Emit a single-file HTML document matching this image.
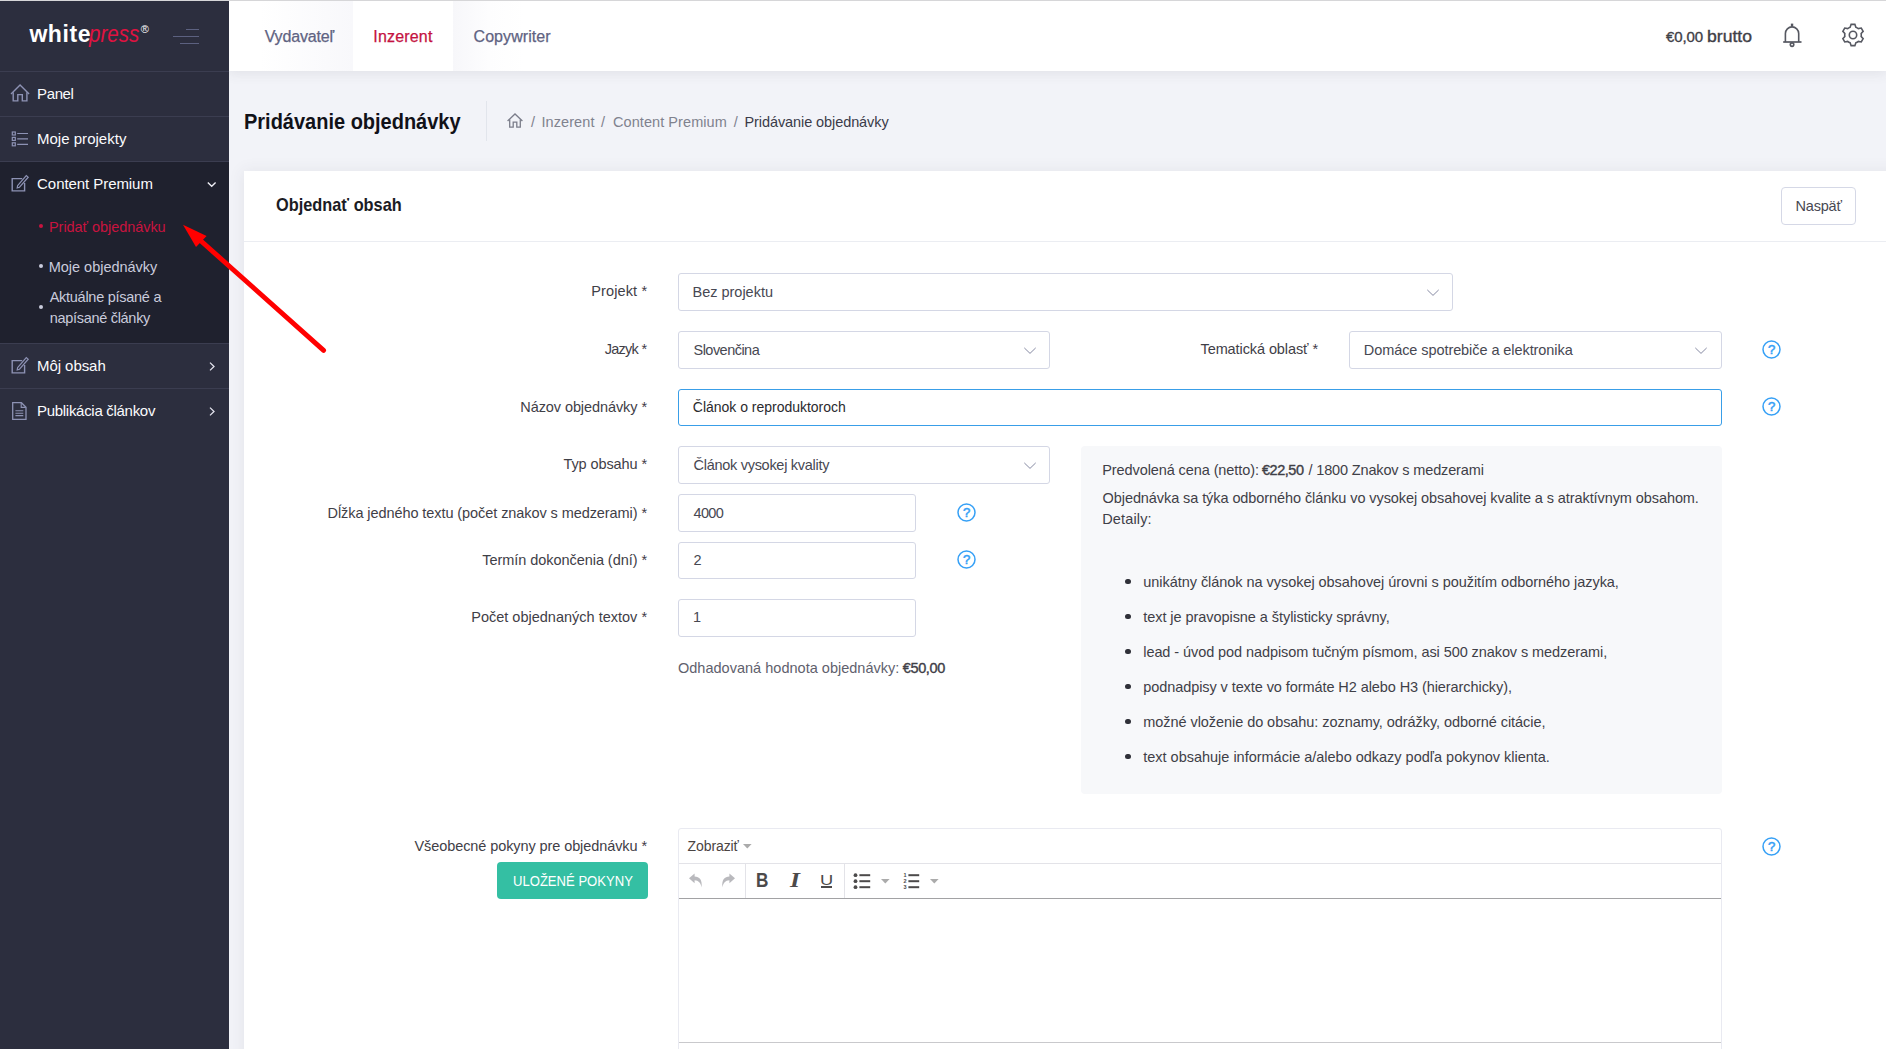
<!DOCTYPE html>
<html lang="sk">
<head>
<meta charset="utf-8">
<title>Pridávanie objednávky</title>
<style>
*{box-sizing:border-box;margin:0;padding:0}
html,body{width:1886px;height:1049px;overflow:hidden;background:#f2f3f8}
body{position:relative;font-family:"Liberation Sans",sans-serif;font-size:14.5px;color:#3f4047}
.a{position:absolute;white-space:nowrap;line-height:1;z-index:10}
.t{position:absolute;white-space:nowrap;line-height:20px;height:20px}
#topline{position:absolute;left:0;top:0;width:1886px;height:1px;background:#d6d6d8;z-index:50}

/* ---------- sidebar ---------- */
#side{position:absolute;left:0;top:1px;width:229px;height:1048px;background:#2c2e3e;z-index:5}
#side .ln{position:absolute;left:0;width:229px;height:1px;background:#3b3d50}
#side .act{position:absolute;left:0;top:161px;width:229px;height:181px;background:#1f212e}
.mi{color:#fbfbfd;font-size:15px}
.si{color:#c9cbdc;font-size:14.5px}
.si.on{color:#c9133f}
#side .dot{position:absolute;width:4px;height:4px;border-radius:50%;background:#c9cbdc}
#side .dot.on{background:#c9133f}
#logo1{color:#fff;font-weight:bold;font-size:23px}
#logo2{color:#e01241;font-style:italic;font-size:24px}
#logo3{color:#fff;font-size:11px}

/* ---------- top bar ---------- */
#top{position:absolute;left:229px;top:1px;width:1657px;height:70px;background:#fff;box-shadow:0 1px 12px 1px rgba(69,65,78,.10);z-index:4}
#top .tab{position:absolute;top:0;height:70px;background:linear-gradient(90deg,#ffffff 25%,#f8f8fb 100%)}
#top .tab.on{background:#fff}
.tt{color:#5f6382;font-size:16px;-webkit-text-stroke:0.25px #5f6382}
.tt.on{color:#c4123f;-webkit-text-stroke:0.25px #c4123f}
.bal{color:#3f4047;font-size:16px;-webkit-text-stroke:0.35px #3f4047}

/* ---------- main ---------- */
#h1{font-weight:bold;font-size:22.3px;color:#111118;line-height:26px;height:26px}
#sep{position:absolute;left:486px;top:101px;width:1px;height:40px;background:#e2e5ec}
.bc{color:#80828e;font-size:14.5px}
.bc.last{color:#3a3b49}
#card{position:absolute;left:244px;top:171px;width:1660px;height:900px;background:#fff;box-shadow:0 1px 15px 1px rgba(69,65,78,.08)}
#cardln{position:absolute;left:244px;top:241px;width:1660px;height:1px;background:#ebedf2}
#h3{font-weight:bold;font-size:18.6px;color:#1b1c24;line-height:22px;height:22px}
#back{position:absolute;left:1781px;top:187px;width:75px;height:38px;border:1px solid #d5d8e6;border-radius:4px;background:#fff}
.lbl{color:#3f4047}
.box{position:absolute;border:1px solid #d4d7e5;border-radius:3px;background:#fff}
.box.f{border-color:#399ee8}
.val{color:#474852}
.chev{position:absolute;width:12px;height:7px;margin-top:0.3px;overflow:visible}
.help{position:absolute;width:19px;height:19px}
#info{position:absolute;left:1081px;top:446px;width:641px;height:348px;background:#f7f8fa;border-radius:4px}
.li{color:#3f4047}
.bul{position:absolute;width:5.6px;height:5.6px;margin:0.2px;border-radius:50%;background:#2f3038}
#est{color:#6b6d78}
#est b{color:#3f4047}
#btn{position:absolute;left:497px;top:862px;width:151px;height:37px;border-radius:4px;background:#34bfa3}
#btnt{color:#fff;font-size:14.3px}
#ed{position:absolute;left:678px;top:828px;width:1044px;height:240px;border:1px solid #e9eaf1;border-radius:3px 3px 0 0;background:#fff}
#edl1{position:absolute;left:679px;top:863px;width:1042px;height:1px;background:#e3e3e8}
#edl2{position:absolute;left:679px;top:898px;width:1042px;height:1px;background:#a2a2a4}
#edl3{position:absolute;left:679px;top:1042px;width:1042px;height:1px;background:#c9c9cc}
.vs{position:absolute;top:864px;width:1px;height:34px;background:#e3e3e8}
#zob{color:#4a4442;font-size:14px}
</style>
</head>
<body>
<div id="topline"></div>

<!-- SIDEBAR -->
<div id="side">
  <div class="act"></div>
  <div class="ln" style="top:70px"></div>
  <div class="ln" style="top:115px"></div>
  <div class="ln" style="top:160px"></div>
  <div class="ln" style="top:342px"></div>
  <div class="ln" style="top:387px"></div>

  <!-- hamburger -->
  <div style="position:absolute;left:186px;top:28px;width:13px;height:1px;background:#5c6180"></div>
  <div style="position:absolute;left:173px;top:35px;width:26px;height:1px;background:#5c6180"></div>
  <div style="position:absolute;left:180px;top:42px;width:19px;height:1px;background:#5c6180"></div>
  <!-- home -->
  <svg style="position:absolute;left:9px;top:82.2px" width="22" height="20" viewBox="0 0 22 20" fill="none" stroke="#8d92b4" stroke-width="1.4" stroke-linejoin="miter"><path d="M2 11 L11.05 2.1 L20.1 11"/><path d="M4.2 9.2 V17.9 H8.8 V11.6 H13.3 V17.9 H17.9 V9.2"/></svg>
  <!-- list -->
  <svg style="position:absolute;left:10px;top:129px" width="20" height="18" viewBox="0 0 20 18" fill="none" stroke="#8d92b4" stroke-width="1.2"><rect x="2.3" y="2" width="3" height="3"/><rect x="2.3" y="7.4" width="3" height="3"/><rect x="2.3" y="12.8" width="3" height="3"/><path d="M7.2 3.5 H18 M7.2 8.9 H18 M7.2 14.3 H18"/></svg>
  <!-- edit -->
  <svg style="position:absolute;left:10.3px;top:172.2px" width="20" height="20" viewBox="0 0 20 20" fill="none" stroke="#8d92b4" stroke-width="1.4"><path d="M12.2 5.6 H2.2 V17.9 H14.6 V10"/><path d="M7.6 12.7 L16.3 2.6 L18.2 4.2 L9.5 14.2 L7.2 14.9 Z" stroke-width="1.2"/></svg>
  <svg style="position:absolute;left:206px;top:180px" width="11" height="7" viewBox="0 0 11 7" fill="none" stroke="#f0f0f6" stroke-width="1.4"><path d="M1.8 1.6 L5.7 5.2 L9.6 1.6"/></svg>
  <!-- edit 2 -->
  <svg style="position:absolute;left:10.3px;top:354.2px" width="20" height="20" viewBox="0 0 20 20" fill="none" stroke="#8d92b4" stroke-width="1.4"><path d="M12.2 5.6 H2.2 V17.9 H14.6 V10"/><path d="M7.6 12.7 L16.3 2.6 L18.2 4.2 L9.5 14.2 L7.2 14.9 Z" stroke-width="1.2"/></svg>
  <svg style="position:absolute;left:208.4px;top:359.7px" width="8" height="11" viewBox="0 0 8 11" fill="none" stroke="#e4e4ee" stroke-width="1.3"><path d="M2 1.6 L6 5.5 L2 9.4"/></svg>
  <!-- doc -->
  <svg style="position:absolute;left:10px;top:399px" width="20" height="22" viewBox="0 0 20 22" fill="none" stroke="#8d92b4" stroke-width="1.3"><path d="M2.7 2.7 H11.4 L16 7.2 V19.3 H2.7 Z"/><path d="M11.2 2.9 V7.4 H15.8" stroke-width="1.1"/><path d="M5.4 10.8 H13.3 M5.4 13.2 H13.3 M5.4 15.6 H13.3" stroke-width="1.1"/></svg>
  <svg style="position:absolute;left:208.4px;top:404.7px" width="8" height="11" viewBox="0 0 8 11" fill="none" stroke="#e4e4ee" stroke-width="1.3"><path d="M2 1.6 L6 5.5 L2 9.4"/></svg>
  <div class="dot on" style="left:39px;top:223px"></div>
  <div class="dot" style="left:39px;top:263px"></div>
  <div class="dot" style="left:39px;top:304px"></div>
</div>

<!-- TOP BAR -->
<div id="top">
  <div class="tab" style="left:0;width:124px"></div>
  <div class="tab on" style="left:124px;width:100px"></div>
  <div class="tab" style="left:224px;width:119px;background:linear-gradient(90deg,#f7f7fa 0%,#fdfdfe 30%,#ffffff 60%)"></div>

  <!-- bell -->
  <svg style="position:absolute;left:1551.3px;top:20px" width="24" height="28" viewBox="0 0 24 28" fill="none" stroke="#565861" stroke-width="1.6"><circle cx="12.05" cy="23.6" r="1.75"/><path d="M5.4 21 V12.55 A6.65 6.65 0 0 1 18.7 12.55 V21" fill="#fff"/><path d="M3.2 21 H21.5" stroke-width="1.7"/><path d="M12.05 5.6 V2.6" stroke-width="2.4"/></svg>
  <!-- gear -->
  <svg style="position:absolute;left:1609.5px;top:19.9px" width="28" height="28" viewBox="0 0 28 28" fill="none" stroke="#565861" stroke-width="1.6" stroke-linejoin="miter"><circle cx="14" cy="14" r="3.7"/><path d="M16.84 6.20 L15.88 3.36 L12.12 3.36 L11.16 6.20 A8.30 8.30 0 0 0 8.66 7.64 L5.73 7.06 L3.85 10.31 L5.83 12.56 A8.30 8.30 0 0 0 5.83 15.44 L3.85 17.69 L5.73 20.94 L8.66 20.36 A8.30 8.30 0 0 0 11.16 21.80 L12.12 24.64 L15.88 24.64 L16.84 21.80 A8.30 8.30 0 0 0 19.34 20.36 L22.27 20.94 L24.15 17.69 L22.17 15.44 A8.30 8.30 0 0 0 22.17 12.56 L24.15 10.31 L22.27 7.06 L19.34 7.64 A8.30 8.30 0 0 0 16.84 6.20 Z"/></svg>
</div>

<div id="card"></div>
<div id="cardln"></div>
<div id="sep"></div>

<!-- breadcrumb home -->
<svg style="position:absolute;left:505.6px;top:112.2px" width="18" height="17" viewBox="0 0 18 17" fill="none" stroke="#7b7d8a" stroke-width="1.3"><path d="M1.6 9 L9 2 L16.4 9"/><path d="M3.7 7.6 V15.2 H7.2 V10.2 H10.8 V15.2 H14.3 V7.6"/></svg>
<div id="back"></div>
<div class="box" style="left:678px;top:273px;width:775px;height:38px"></div>
<div class="box" style="left:678px;top:331px;width:372px;height:38px"></div>
<div class="box" style="left:1349px;top:331px;width:373px;height:38px"></div>
<div class="box f" style="left:678px;top:389px;width:1044px;height:37px"></div>
<div class="box" style="left:678px;top:446px;width:372px;height:38px"></div>
<div class="box" style="left:678px;top:494px;width:238px;height:38px"></div>
<div class="box" style="left:678px;top:542px;width:238px;height:37px"></div>
<div class="box" style="left:678px;top:599px;width:238px;height:38px"></div>
<svg class="chev" style="left:1427px;top:289px" viewBox="0 0 12 7" fill="none" stroke="#80849e" stroke-width="0.95"><path d="M0.3 0.9 L6 6.4 L11.7 0.9"/></svg><svg class="chev" style="left:1024px;top:347px" viewBox="0 0 12 7" fill="none" stroke="#80849e" stroke-width="0.95"><path d="M0.3 0.9 L6 6.4 L11.7 0.9"/></svg><svg class="chev" style="left:1695px;top:347px" viewBox="0 0 12 7" fill="none" stroke="#80849e" stroke-width="0.95"><path d="M0.3 0.9 L6 6.4 L11.7 0.9"/></svg><svg class="chev" style="left:1024px;top:462px" viewBox="0 0 12 7" fill="none" stroke="#80849e" stroke-width="0.95"><path d="M0.3 0.9 L6 6.4 L11.7 0.9"/></svg>
<svg class="help" style="left:1761.5px;top:340px" viewBox="0 0 19 19"><circle cx="9.5" cy="9.5" r="8.5" fill="none" stroke="#36a0f6" stroke-width="1.5"/><text x="9.6" y="14.2" text-anchor="middle" font-family="Liberation Sans, sans-serif" font-size="13.2" fill="#36a0f6" stroke="#36a0f6" stroke-width="0.5">?</text></svg><svg class="help" style="left:1761.5px;top:396.8px" viewBox="0 0 19 19"><circle cx="9.5" cy="9.5" r="8.5" fill="none" stroke="#36a0f6" stroke-width="1.5"/><text x="9.6" y="14.2" text-anchor="middle" font-family="Liberation Sans, sans-serif" font-size="13.2" fill="#36a0f6" stroke="#36a0f6" stroke-width="0.5">?</text></svg><svg class="help" style="left:956.5px;top:503px" viewBox="0 0 19 19"><circle cx="9.5" cy="9.5" r="8.5" fill="none" stroke="#36a0f6" stroke-width="1.5"/><text x="9.6" y="14.2" text-anchor="middle" font-family="Liberation Sans, sans-serif" font-size="13.2" fill="#36a0f6" stroke="#36a0f6" stroke-width="0.5">?</text></svg><svg class="help" style="left:956.5px;top:550.2px" viewBox="0 0 19 19"><circle cx="9.5" cy="9.5" r="8.5" fill="none" stroke="#36a0f6" stroke-width="1.5"/><text x="9.6" y="14.2" text-anchor="middle" font-family="Liberation Sans, sans-serif" font-size="13.2" fill="#36a0f6" stroke="#36a0f6" stroke-width="0.5">?</text></svg><svg class="help" style="left:1762px;top:837px" viewBox="0 0 19 19"><circle cx="9.5" cy="9.5" r="8.5" fill="none" stroke="#36a0f6" stroke-width="1.5"/><text x="9.6" y="14.2" text-anchor="middle" font-family="Liberation Sans, sans-serif" font-size="13.2" fill="#36a0f6" stroke="#36a0f6" stroke-width="0.5">?</text></svg>
<div id="info"></div>
<div class="bul" style="left:1125.3px;top:578.5px"></div>
<div class="bul" style="left:1125.3px;top:613.5px"></div>
<div class="bul" style="left:1125.3px;top:648.5px"></div>
<div class="bul" style="left:1125.3px;top:683.5px"></div>
<div class="bul" style="left:1125.3px;top:718.5px"></div>
<div class="bul" style="left:1125.3px;top:753.5px"></div>
<div id="btn"></div>
<div id="ed"></div>
<div id="edl1"></div><div id="edl2"></div><div id="edl3"></div>
<div class="vs" style="left:745px"></div><div class="vs" style="left:844px"></div>
<!-- editor toolbar icons -->
<svg style="position:absolute;left:742.5px;top:843.5px" width="9" height="5" viewBox="0 0 9 5"><path d="M0 0 H8.6 L4.3 4.4 Z" fill="#ababab"/></svg>
<svg style="position:absolute;left:688px;top:872px" width="16" height="17" viewBox="0 0 16 17"><path d="M1 6.2 L6.6 1.4 V4.4 C11.4 4.6 14.4 7.4 13.6 15.4 C12.8 11 10.6 8.6 6.6 8.3 V11.2 Z" fill="#b9b9bd"/></svg>
<svg style="position:absolute;left:720px;top:872px" width="16" height="17" viewBox="0 0 16 17"><path d="M15 6.2 L9.4 1.4 V4.4 C4.6 4.6 1.6 7.4 2.4 15.4 C3.2 11 5.4 8.6 9.4 8.3 V11.2 Z" fill="#b9b9bd"/></svg>
<span class="a" style="left:756.3px;top:870.6px;font-size:19.5px;font-weight:bold;color:#4c4a4a;transform-origin:0 50%;transform:scaleX(.88)">B</span>
<span class="a" style="left:789.5px;top:869.8px;font-family:'Liberation Serif',serif;font-style:italic;font-weight:bold;font-size:20.5px;color:#4c4a4a;transform-origin:0 50%;transform:scaleX(1.25)">I</span>
<div style="position:absolute;left:821.3px;top:886.4px;width:10.9px;height:1.5px;background:#4c4a4a"></div>
<svg style="position:absolute;left:853px;top:872px" width="18" height="18" viewBox="0 0 18 18" fill="#4c4a4a"><circle cx="2.5" cy="3.2" r="1.9"/><circle cx="2.5" cy="9.2" r="1.9"/><circle cx="2.5" cy="15.2" r="1.9"/><rect x="6.4" y="2.2" width="10.8" height="2"/><rect x="6.4" y="8.2" width="10.8" height="2"/><rect x="6.4" y="14.2" width="10.8" height="2"/></svg>
<svg style="position:absolute;left:880.5px;top:878.5px" width="9" height="5" viewBox="0 0 9 5"><path d="M0 0 H8.6 L4.3 4.4 Z" fill="#ababab"/></svg>
<svg style="position:absolute;left:903px;top:872px" width="18" height="18" viewBox="0 0 18 18" fill="#4c4a4a"><rect x="5.4" y="2.2" width="10.8" height="2"/><rect x="5.4" y="8.2" width="10.8" height="2"/><rect x="5.4" y="14.2" width="10.8" height="2"/><text x="0.4" y="5" font-family="Liberation Sans, sans-serif" font-size="5.5" font-weight="bold">1</text><text x="0.4" y="11" font-family="Liberation Sans, sans-serif" font-size="5.5" font-weight="bold">2</text><text x="0.4" y="17" font-family="Liberation Sans, sans-serif" font-size="5.5" font-weight="bold">3</text></svg>
<svg style="position:absolute;left:929.5px;top:878.5px" width="9" height="5" viewBox="0 0 9 5"><path d="M0 0 H8.6 L4.3 4.4 Z" fill="#ababab"/></svg>
<!-- red arrow -->
<svg style="position:absolute;left:170px;top:210px;z-index:30" width="170" height="155" viewBox="170 210 170 155"><path d="M323.6 350.3 L201 241" stroke="#ff0000" stroke-width="4.9" stroke-linecap="round" fill="none"/><path d="M183 224.8 L206.6 236 L196 247 Z" fill="#ff0000"/></svg>

<!--TEXTS-->
<span class="a" id="logo1" style="left:29.40px;top:23.00px;letter-spacing:0.578px;">white</span>
<span class="a" id="logo2" style="left:89.36px;top:22.00px;transform-origin:0 50%;transform:scaleX(0.8561);">press</span>
<span class="a" id="logo3" style="left:140.80px;top:24.00px;letter-spacing:0.000px;">®</span>
<span class="a mi" id="m1" style="left:37.00px;top:86.25px;letter-spacing:-0.358px;">Panel</span>
<span class="a mi" id="m2" style="left:37.00px;top:131.25px;letter-spacing:0.017px;">Moje projekty</span>
<span class="a mi" id="m3" style="left:37.10px;top:176.25px;letter-spacing:-0.065px;">Content Premium</span>
<span class="a si on" id="s1" style="left:49.00px;top:220.00px;letter-spacing:-0.051px;">Pridať objednávku</span>
<span class="a si" id="s2" style="left:48.70px;top:260.00px;letter-spacing:-0.012px;">Moje objednávky</span>
<span class="a si" id="s3" style="left:49.70px;top:290.00px;letter-spacing:-0.270px;">Aktuálne písané a</span>
<span class="a si" id="s4" style="left:49.70px;top:310.50px;letter-spacing:-0.296px;">napísané články</span>
<span class="a mi" id="m4" style="left:37.00px;top:358.25px;letter-spacing:-0.058px;">Môj obsah</span>
<span class="a mi" id="m5" style="left:37.00px;top:403.25px;letter-spacing:-0.294px;">Publikácia článkov</span>
<span class="a tt" id="t1" style="left:264.70px;top:28.90px;letter-spacing:-0.165px;">Vydavateľ</span>
<span class="a tt on" id="t2" style="left:373.30px;top:28.90px;letter-spacing:0.176px;">Inzerent</span>
<span class="a tt" id="t3" style="left:473.50px;top:28.90px;letter-spacing:0.074px;">Copywriter</span>
<span class="a bal" id="bal" style="left:1666.00px;top:28.90px;letter-spacing:-0.124px;font-size:15px">€0,00</span>
<span class="a bal" id="bal2" style="left:1706.60px;top:28.90px;transform-origin:0 50%;transform:scaleX(1.0996);font-size:16px">brutto</span>
<span class="a" id="h1" style="left:243.80px;top:108.75px;transform-origin:0 50%;transform:scaleX(0.8962);">Pridávanie objednávky</span>
<span class="a bc" id="b1" style="left:531.00px;top:115.00px;letter-spacing:0.000px;">/</span>
<span class="a bc" id="b2" style="left:541.50px;top:115.00px;letter-spacing:0.077px;">Inzerent</span>
<span class="a bc" id="b3" style="left:601.00px;top:115.00px;letter-spacing:0.000px;">/</span>
<span class="a bc" id="b4" style="left:613.00px;top:115.00px;letter-spacing:0.068px;">Content Premium</span>
<span class="a bc" id="b5" style="left:733.80px;top:115.00px;letter-spacing:0.000px;">/</span>
<span class="a bc last" id="b6" style="left:744.50px;top:115.00px;letter-spacing:-0.087px;">Pridávanie objednávky</span>
<span class="a" id="h3" style="left:275.70px;top:194.00px;transform-origin:0 50%;transform:scaleX(0.8778);">Objednať obsah</span>
<span class="a val" id="backt" style="left:1795.50px;top:199.25px;letter-spacing:-0.203px;">Naspäť</span>
<span class="a lbl" id="l1" style="left:591.25px;top:284.00px;letter-spacing:0.124px;">Projekt *</span>
<span class="a lbl" id="l2" style="left:604.75px;top:342.25px;letter-spacing:-0.740px;">Jazyk *</span>
<span class="a lbl" id="l3" style="left:1200.50px;top:342.25px;letter-spacing:-0.090px;">Tematická oblasť *</span>
<span class="a lbl" id="l4" style="left:520.25px;top:399.75px;letter-spacing:-0.080px;">Názov objednávky *</span>
<span class="a lbl" id="l5" style="left:563.50px;top:456.75px;letter-spacing:-0.100px;">Typ obsahu *</span>
<span class="a lbl" id="l6" style="left:327.50px;top:505.50px;letter-spacing:-0.077px;">Dĺžka jedného textu (počet znakov s medzerami) *</span>
<span class="a lbl" id="l7" style="left:482.25px;top:553.00px;letter-spacing:-0.051px;">Termín dokončenia (dní) *</span>
<span class="a lbl" id="l8" style="left:471.25px;top:610.00px;letter-spacing:0.003px;">Počet objednaných textov *</span>
<span class="a lbl" id="l9" style="left:414.50px;top:838.75px;letter-spacing:-0.089px;">Všeobecné pokyny pre objednávku *</span>
<span class="a val" id="v1" style="left:692.50px;top:285.00px;letter-spacing:-0.012px;">Bez projektu</span>
<span class="a val" id="v2" style="left:693.50px;top:343.00px;letter-spacing:-0.525px;">Slovenčina</span>
<span class="a val" id="v3" style="left:1363.75px;top:343.00px;letter-spacing:-0.073px;">Domáce spotrebiče a elektronika</span>
<span class="a val" id="v4" style="left:692.80px;top:399.75px;letter-spacing:-0.015px;font-size:14px;color:#2a2a2e">Článok o reproduktoroch</span>
<span class="a val" id="v5" style="left:693.50px;top:457.50px;letter-spacing:-0.282px;">Článok vysokej kvality</span>
<span class="a val" id="v6" style="left:693.50px;top:505.50px;letter-spacing:-0.681px;">4000</span>
<span class="a val" id="v7" style="left:693.50px;top:553.00px;letter-spacing:0.000px;">2</span>
<span class="a val" id="v8" style="left:693.10px;top:610.00px;letter-spacing:0.000px;">1</span>
<span class="a" id="e1" style="left:678.00px;top:661.00px;letter-spacing:0.015px;color:#5f616d">Odhadovaná hodnota objednávky:</span>
<span class="a" id="e2" style="left:902.80px;top:661.00px;letter-spacing:-0.377px;color:#3f4047;-webkit-text-stroke:0.38px #3f4047">€50,00</span>
<span class="a li" id="i1" style="left:1102.25px;top:463.00px;letter-spacing:-0.092px;">Predvolená cena (netto):</span>
<span class="a li" id="i2" style="left:1262.00px;top:463.00px;letter-spacing:-0.477px;-webkit-text-stroke:0.38px #3f4047">€22,50</span>
<span class="a li" id="i3" style="left:1308.50px;top:463.00px;letter-spacing:-0.148px;">/ 1800 Znakov s medzerami</span>
<span class="a li" id="i4" style="left:1102.60px;top:491.00px;letter-spacing:-0.084px;">Objednávka sa týka odborného článku vo vysokej obsahovej kvalite a s atraktívnym obsahom.</span>
<span class="a li" id="i5" style="left:1102.25px;top:512.00px;letter-spacing:0.147px;">Detaily:</span>
<span class="a li" id="li1" style="left:1143.25px;top:575.00px;letter-spacing:-0.044px;">unikátny článok na vysokej obsahovej úrovni s použitím odborného jazyka,</span>
<span class="a li" id="li2" style="left:1143.25px;top:610.00px;letter-spacing:-0.058px;">text je pravopisne a štylisticky správny,</span>
<span class="a li" id="li3" style="left:1143.25px;top:645.00px;letter-spacing:-0.078px;">lead - úvod pod nadpisom tučným písmom, asi 500 znakov s medzerami,</span>
<span class="a li" id="li4" style="left:1143.25px;top:680.00px;letter-spacing:-0.080px;">podnadpisy v texte vo formáte H2 alebo H3 (hierarchicky),</span>
<span class="a li" id="li5" style="left:1143.25px;top:715.00px;letter-spacing:-0.059px;">možné vloženie do obsahu: zoznamy, odrážky, odborné citácie,</span>
<span class="a li" id="li6" style="left:1143.25px;top:750.00px;letter-spacing:-0.010px;">text obsahuje informácie a/alebo odkazy podľa pokynov klienta.</span>
<span class="a" id="btnt" style="left:512.59px;top:874.00px;transform-origin:0 50%;transform:scaleX(0.9146);">ULOŽENÉ POKYNY</span>
<span class="a" id="zob" style="left:687.50px;top:838.75px;letter-spacing:-0.083px;">Zobraziť</span>
<span class="a" id="tbu" style="left:820.21px;top:872.20px;transform-origin:0 50%;transform:scaleX(1.1889);font-size:15.4px;color:#4c4a4a">U</span>
<!--/TEXTS-->
</body>
</html>
